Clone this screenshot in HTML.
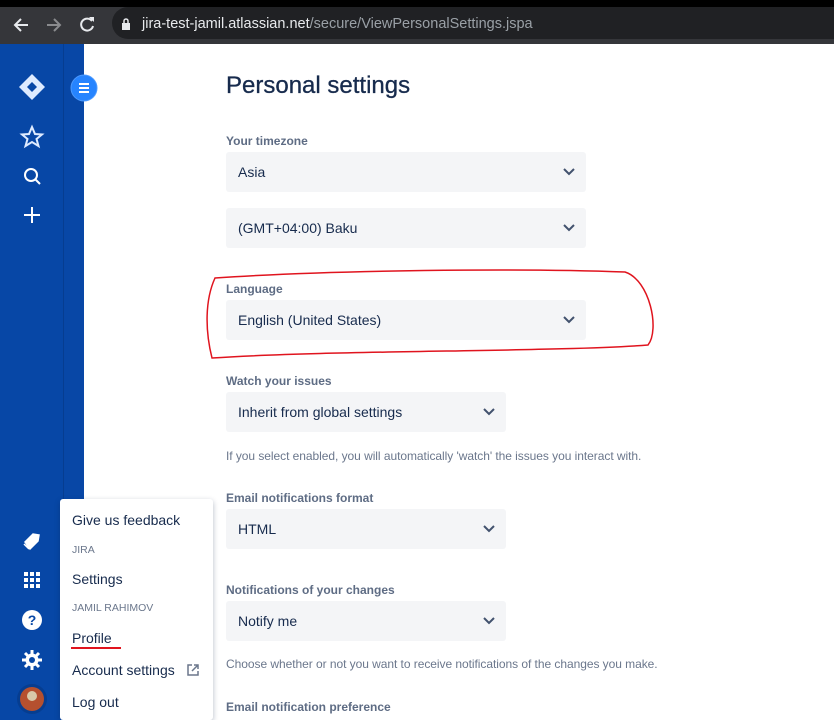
<!DOCTYPE html>
<html><head><style>
*{box-sizing:border-box;margin:0;padding:0}
body{width:834px;height:720px;overflow:hidden;background:#fff;font-family:"Liberation Sans",sans-serif;position:relative}
.top{position:absolute;left:0;top:0;width:834px;height:7px;background:#000}
.bar{position:absolute;left:0;top:7px;width:834px;height:37px;background:#35363a}
.url{position:absolute;left:112px;top:7px;width:722px;height:32px;background:#202124;border-radius:16px 0 0 16px}
.sb{position:absolute;left:0;top:44px;width:63px;height:676px;background:#0747a6}
.sb2{position:absolute;left:63px;top:44px;width:21px;height:676px;background:#0847a6;border-left:1px solid #063d90}
.lbl{position:absolute;left:226px;font-size:12px;font-weight:bold;color:#5e6c84}
.sel{position:absolute;left:226px;height:40px;background:#f4f5f7;border-radius:3px;font-size:14px;color:#172b4d;padding:12px 12px}
.sel svg{position:absolute;right:10px;top:13px}
.help{position:absolute;left:226px;font-size:12px;color:#6b778c;letter-spacing:-0.05px}
.menu{position:absolute;left:60px;top:499px;width:153px;height:221px;background:#fff;border-radius:3px;box-shadow:0 2px 6px rgba(9,30,66,.3)}
.mi{position:absolute;left:12px;font-size:14px;color:#172b4d}
.mh{position:absolute;left:12px;font-size:10.5px;color:#6b778c}
</style></head><body>
<div class="top"></div><div class="bar"></div>
<div class="url"></div>
<svg style="position:absolute;left:0;top:7px" width="110" height="37">
<path d="M28 18H15M21 12l-6 6 6 6" stroke="#e8eaed" stroke-width="2" fill="none"/>
<path d="M47 18h13M54 12l6 6-6 6" stroke="#8a8b8e" stroke-width="2" fill="none"/>
<path d="M92 14a6 6 0 1 0 1 5" stroke="#e8eaed" stroke-width="2" fill="none"/><path d="M89 10h5v5z" fill="#e8eaed"/>
</svg>
<svg style="position:absolute;left:121px;top:18px" width="10" height="12"><rect x="1" y="5" width="8" height="7" fill="#e8eaed"/><path d="M3 6V3a2 2 0 0 1 4 0v3" stroke="#e8eaed" stroke-width="1.5" fill="none"/></svg>
<div style="position:absolute;left:142px;top:16px;font-size:14.5px;color:#e8eaed">jira-test-jamil.atlassian.net<span style="color:#9aa0a6">/secure/ViewPersonalSettings.jspa</span></div>
<div class="sb"></div><div class="sb2"></div>
<svg style="position:absolute;left:0;top:44px" width="100" height="676">
<path d="M32 30l13 13-13 13-13-13z" fill="#deebff"/><path d="M32 38l5 5-5 5-5-5z" fill="#0747a6"/>
<path d="M32 83l3 7 7 .5-5.5 4.5 2 7-6.5-4-6.5 4 2-7-5.5-4.5 7-.5z" stroke="#deebff" stroke-width="2" fill="none"/>
<circle cx="31" cy="131" r="6" stroke="#fff" stroke-width="2" fill="none"/><path d="M35 135l5 5" stroke="#fff" stroke-width="2"/>
<path d="M32 163v16M24 171h16" stroke="#fff" stroke-width="2"/>
<circle cx="84" cy="44" r="13" fill="#2684ff" stroke="#4c9aff" stroke-width="1"/>
<path d="M79 40h10M79 44h10M79 48h10" stroke="#fff" stroke-width="2"/>
<path d="M25 498l8-8 6 1-1 6-8 8zM24 500l5 5" fill="#fff" stroke="#fff" stroke-width="1.5"/>
<g fill="#fff"><rect x="24" y="528" width="4" height="4"/><rect x="30" y="528" width="4" height="4"/><rect x="36" y="528" width="4" height="4"/><rect x="24" y="534" width="4" height="4"/><rect x="30" y="534" width="4" height="4"/><rect x="36" y="534" width="4" height="4"/><rect x="24" y="540" width="4" height="4"/><rect x="30" y="540" width="4" height="4"/><rect x="36" y="540" width="4" height="4"/></g>
<circle cx="32" cy="576" r="10" fill="#fff"/><text x="32" y="581" font-size="14" font-weight="bold" fill="#0747a6" text-anchor="middle" font-family="Liberation Sans">?</text>
<g stroke="#fff" stroke-width="3"><path d="M32 606v20M22 616h20M25 609l14 14M39 609l-14 14"/></g><circle cx="32" cy="616" r="6.5" fill="#fff"/><circle cx="32" cy="616" r="3" fill="#0747a6"/>
<circle cx="32" cy="655" r="15" fill="#063d90"/><circle cx="32" cy="655" r="12" fill="#b5502f"/><circle cx="32" cy="652" r="5" fill="#d9c9a8"/>
</svg>
<div style="position:absolute;left:226px;top:72px;font-size:24px;color:#172b4d;-webkit-text-stroke:0.3px #172b4d">Personal settings</div>
<div class="lbl" style="top:134px">Your timezone</div>
<div class="sel" style="top:152px;width:360px">Asia<svg width="14" height="14"><path d="M2 4l5 5 5-5" stroke="#42526e" stroke-width="2" fill="none"/></svg></div>
<div class="sel" style="top:208px;width:360px">(GMT+04:00) Baku<svg width="14" height="14"><path d="M2 4l5 5 5-5" stroke="#42526e" stroke-width="2" fill="none"/></svg></div>
<div class="lbl" style="top:282px">Language</div>
<div class="sel" style="top:300px;width:360px">English (United States)<svg width="14" height="14"><path d="M2 4l5 5 5-5" stroke="#42526e" stroke-width="2" fill="none"/></svg></div>
<div class="lbl" style="top:374px">Watch your issues</div>
<div class="sel" style="top:392px;width:280px">Inherit from global settings<svg width="14" height="14"><path d="M2 4l5 5 5-5" stroke="#42526e" stroke-width="2" fill="none"/></svg></div>
<div class="help" style="top:449px">If you select enabled, you will automatically 'watch' the issues you interact with.</div>
<div class="lbl" style="top:491px">Email notifications format</div>
<div class="sel" style="top:509px;width:280px">HTML<svg width="14" height="14"><path d="M2 4l5 5 5-5" stroke="#42526e" stroke-width="2" fill="none"/></svg></div>
<div class="lbl" style="top:583px">Notifications of your changes</div>
<div class="sel" style="top:601px;width:280px">Notify me<svg width="14" height="14"><path d="M2 4l5 5 5-5" stroke="#42526e" stroke-width="2" fill="none"/></svg></div>
<div class="help" style="top:657px">Choose whether or not you want to receive notifications of the changes you make.</div>
<div class="lbl" style="top:700px">Email notification preference</div>
<svg style="position:absolute;left:0;top:0" width="834" height="720"><path d="M215 278C330 270 520 268 625 272C650 280 660 330 648 345C560 352 330 350 212 358C205 330 205 300 215 278Z" stroke="#e0141e" stroke-width="1.5" fill="none"/></svg>
<div class="menu">
<div class="mi" style="top:13px">Give us feedback</div>
<div class="mh" style="top:45px">JIRA</div>
<div class="mi" style="top:72px">Settings</div>
<div class="mh" style="top:103px">JAMIL RAHIMOV</div>
<div class="mi" style="top:131px">Profile</div>
<div style="position:absolute;left:11px;top:148px;width:50px;height:2px;background:#e0141e"></div>
<div class="mi" style="top:163px">Account settings</div>
<svg style="position:absolute;left:126px;top:164px" width="14" height="14"><path d="M6 2H2v10h10V8M8 2h4v4M12 2L6 8" stroke="#6b778c" stroke-width="1.5" fill="none"/></svg>
<div class="mi" style="top:195px">Log out</div>
</div>
</body></html>
